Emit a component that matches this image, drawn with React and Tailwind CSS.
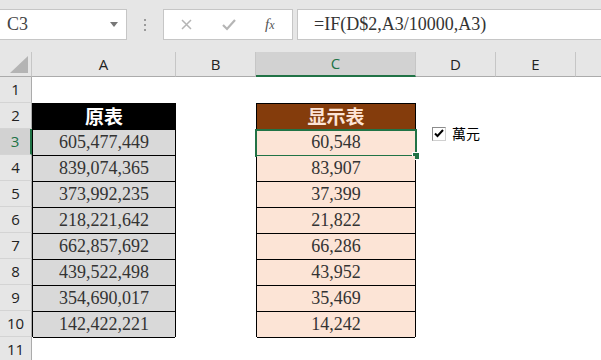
import React from 'react';

const original = ['605,477,449', '839,074,365', '373,992,235', '218,221,642', '662,857,692', '439,522,498', '354,690,017', '142,422,221'];
const shown = ['60,548', '83,907', '37,399', '21,822', '66,286', '43,952', '35,469', '14,242'];

const serif = { fontFamily: '"Liberation Serif", "Times New Roman", serif' };

function ColHeader({ label, width, active }) {
  return (
    <div
      className={
        'flex items-center justify-center border-r border-[#c6c6c6] text-[15px] ' +
        (active ? 'bg-[#d2d2d2] text-[#217346] border-b-2 border-b-[#217346]' : 'text-[#222] border-b border-b-[#ababab]')
      }
      style={{ width }}
    >
      {label}
    </div>
  );
}

export default function App() {
  const rows = [1, 2, 3, 4, 5, 6, 7, 8, 9, 10, 11];

  return (
    <div className="relative w-[601px] h-[360px] overflow-hidden bg-white font-['Open_Sans','Noto_Sans',sans-serif]">
      {/* formula bar */}
      <div className="h-[52px] bg-[#e6e6e6] pt-[9px] flex items-start">
        <div className="w-[127px] h-[31px] bg-white border border-[#c6c6c6] border-l-0 flex items-center justify-between pl-[7px] pr-[8px]">
          <span className="text-[18px] text-[#444]" style={serif}>C3</span>
          <svg width="8" height="5" viewBox="0 0 8 5"><path d="M0 0h8L4 5z" fill="#777" /></svg>
        </div>
        <div className="w-[36px] h-[31px] flex flex-col items-center justify-center gap-[3px]">
          <div className="w-[2px] h-[2px] bg-[#9a9a9a]" />
          <div className="w-[2px] h-[2px] bg-[#9a9a9a]" />
          <div className="w-[2px] h-[2px] bg-[#9a9a9a]" />
        </div>
        <div className="w-[130px] h-[31px] bg-white border border-[#c6c6c6] flex items-center pl-[17px]">
          <svg width="11" height="11" viewBox="0 0 11 11">
            <path d="M1 1l9 9M10 1l-9 9" stroke="#b5b5b5" strokeWidth="1.5" />
          </svg>
          <svg width="14" height="12" viewBox="0 0 14 12" className="ml-[30px]">
            <path d="M1 6l4 4 8-9" stroke="#b5b5b5" strokeWidth="2.2" fill="none" />
          </svg>
          <span className="ml-[29px] text-[15px] italic text-[#555]" style={serif}>f<span className="text-[12px]">x</span></span>
        </div>
        <div className="ml-[4px] flex-1 h-[31px] bg-white border border-[#c6c6c6] border-r-0 flex items-center pl-[16px]">
          <span className="text-[18px] text-[#333]" style={serif}>=IF(D$2,A3/10000,A3)</span>
        </div>
      </div>

      {/* column headers */}
      <div className="flex h-[25px] bg-[#e6e6e6]">
        <div className="w-[32px] border-r border-[#c6c6c6] border-b border-b-[#ababab] flex items-end justify-end pr-[3px] pb-[3px]">
          <svg width="18" height="17" viewBox="0 0 18 17"><path d="M18 0V17H0z" fill="#b4b4b4" /></svg>
        </div>
        <ColHeader label="A" width={144} />
        <ColHeader label="B" width={80} />
        <ColHeader label="C" width={160} active />
        <ColHeader label="D" width={80} />
        <ColHeader label="E" width={80} />
        <div className="flex-1 border-b border-b-[#ababab]" />
      </div>

      {/* body */}
      <div className="flex">
        <div className="w-[32px] flex flex-col">
          {rows.map((r) => (
            <div
              key={r}
              className={
                'h-[26px] flex items-center justify-center text-[15px] border-b border-[#d4d4d4] ' +
                (r === 3
                  ? 'bg-[#d2d2d2] text-[#217346] border-r-2 border-r-[#217346]'
                  : 'bg-[#e6e6e6] text-[#222] border-r border-r-[#ababab]')
              }
            >
              {r}
            </div>
          ))}
        </div>

        <div className="grid grid-cols-[144px_80px_160px_80px_80px_1fr] grid-rows-[26px_234px]">
          {/* table A */}
          <div className="col-start-1 row-start-2 flex flex-col border-t border-l border-r border-black">
            <div className="h-[26px] bg-black border-b border-black flex items-center justify-center text-white text-[19px] font-bold font-['Noto_Sans_CJK_TC',sans-serif]">
              原表
            </div>
            {original.map((v) => (
              <div key={v} className="h-[26px] bg-[#d9d9d9] border-b border-black flex items-center justify-center text-[18px] text-[#333]" style={serif}>
                {v}
              </div>
            ))}
          </div>

          {/* table C */}
          <div className="col-start-3 row-start-2 flex flex-col border-t border-l border-r border-black">
            <div className="h-[26px] bg-[#843c0c] border-b border-black flex items-center justify-center text-[#fce4d6] text-[19px] font-bold font-['Noto_Sans_CJK_TC',sans-serif]">
              显示表
            </div>
            {shown.map((v, i) => (
              <div key={v} className="relative h-[26px] bg-[#fce4d6] border-b border-black flex items-center justify-center text-[18px] text-[#333]" style={serif}>
                {v}
                {i === 0 && (
                  <>
                    <div className="absolute -left-[2px] -top-[1px] -right-[2px] -bottom-[2px] border-2 border-[#217346]" />
                    <div className="absolute -right-[4px] -bottom-[4px] w-[6px] h-[6px] bg-[#217346] outline outline-1 outline-white" />
                  </>
                )}
              </div>
            ))}
          </div>
        </div>
      </div>

      {/* checkbox control floating over the sheet */}
      <div className="absolute left-[432px] top-[123px] flex items-center gap-[6px]">
        <div className="w-[14px] h-[14px] bg-white border border-[#8c8c8c] border-r-[#d0d0d0] border-b-[#d0d0d0] flex items-center justify-center">
          <svg width="10" height="9" viewBox="0 0 10 9"><path d="M1 4.5l2.5 2.5L9 1" stroke="#000" strokeWidth="2" fill="none" /></svg>
        </div>
        <span className="text-[14px] text-black font-['Noto_Sans_CJK_TC',sans-serif]">萬元</span>
      </div>
    </div>
  );
}
